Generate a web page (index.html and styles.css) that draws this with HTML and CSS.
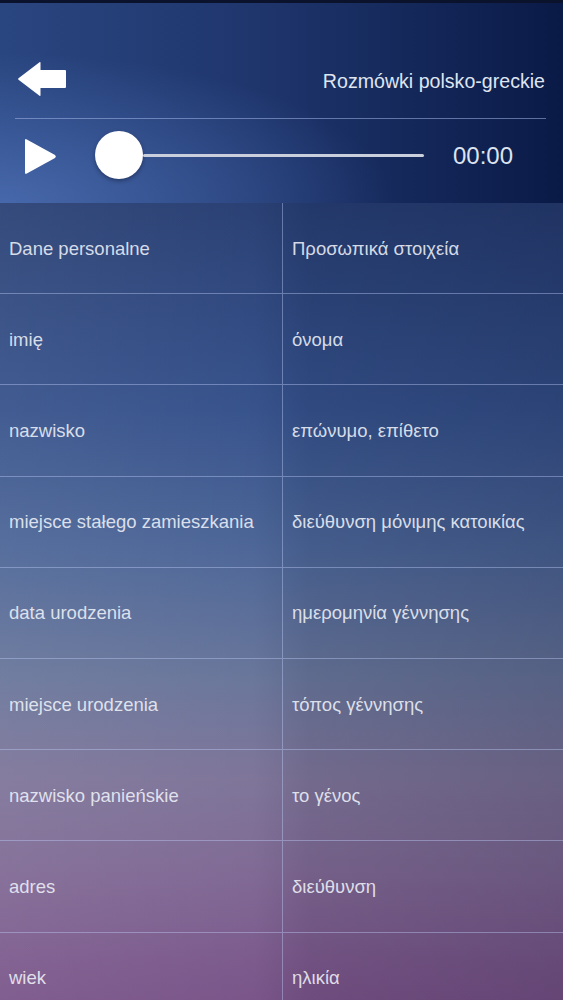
FILE: index.html
```html
<!DOCTYPE html>
<html lang="pl">
<head>
<meta charset="utf-8">
<title>Rozmówki polsko-greckie</title>
<link rel="stylesheet" href="styles.css">
</head>
<body>
<div class="screen">
  <header class="header">
    <div class="topbar">
      <svg class="back" viewBox="0 0 50 36" width="50" height="36" aria-label="Wstecz">
        <path d="M1.5 17.3 L22.5 1.2 Q23.5 0.6 23.5 1.8 L23.5 9 L48 9 Q49 9 49 10 L49 26 Q49 27 48 27 L23.5 27 L23.5 34.2 Q23.5 35.4 22.5 34.8 L1.5 18.7 Q0.6 18 1.5 17.3 Z" fill="#fff"/>
      </svg>
      <div class="title">Rozmówki polsko-greckie</div>
    </div>
    <div class="sep"></div>
    <div class="player">
      <svg class="play" viewBox="0 0 33 37" width="33" height="37" aria-label="Odtwórz">
        <path d="M1 2.5 Q1 0.5 2.8 1.4 L31 17 Q32.8 18.5 31 20 L2.8 35.6 Q1 36.5 1 34.5 Z" fill="#fff"/>
      </svg>
      <div class="slider">
        <div class="knob"></div>
        <div class="track"></div>
      </div>
      <div class="time">00:00</div>
    </div>
  </header>
  <main class="table">
    <div class="row"><div class="cell">Dane personalne</div><div class="cell">Προσωπικά στοιχεία</div></div>
    <div class="row"><div class="cell">imię</div><div class="cell">όνομα</div></div>
    <div class="row"><div class="cell">nazwisko</div><div class="cell">επώνυμο, επίθετο</div></div>
    <div class="row"><div class="cell">miejsce stałego zamieszkania</div><div class="cell">διεύθυνση μόνιμης κατοικίας</div></div>
    <div class="row"><div class="cell">data urodzenia</div><div class="cell">ημερομηνία γέννησης</div></div>
    <div class="row"><div class="cell">miejsce urodzenia</div><div class="cell">τόπος γέννησης</div></div>
    <div class="row"><div class="cell">nazwisko panieńskie</div><div class="cell">το γένος</div></div>
    <div class="row"><div class="cell">adres</div><div class="cell">διεύθυνση</div></div>
    <div class="row"><div class="cell">wiek</div><div class="cell">ηλικία</div></div>
  </main>
</div>
</body>
</html>
```
FILE: styles.css
```css
* { box-sizing: border-box; }
html, body { margin: 0; padding: 0; }
body {
  width: 563px;
  height: 1000px;
  overflow: hidden;
  font-family: "Liberation Sans", Arial, "DejaVu Sans", sans-serif;
  background: #6e4a7e;
}
.screen {
  width: 563px;
  height: 1000px;
  display: flex;
  flex-direction: column;
  overflow: hidden;
}
.header {
  height: 203px;
  flex: none;
  border-top: 3px solid #0b122c;
  padding-top: 58px;
  background:
    radial-gradient(ellipse 70% 75% at 0% 100%, rgba(80,115,185,0.75) 0%, rgba(80,115,185,0) 100%),
    linear-gradient(to right, #2a4680 0%, #1f366d 45%, #0a1a47 100%);
}
.topbar {
  height: 36px;
  display: flex;
  align-items: center;
  justify-content: space-between;
  padding: 0 18px 0 17px;
}
.back { display: block; }
.title {
  color: #dfe5f1;
  font-size: 19.6px;
  padding-top: 4px;
}
.sep {
  height: 1px;
  margin: 21px 17px 0 15px;
  background: rgba(160,180,230,0.55);
}
.player {
  display: flex;
  align-items: center;
  height: 48px;
  margin-top: 12px;
  padding-left: 24px;
}
.play { display: block; margin-top: 2px; }
.slider {
  display: flex;
  align-items: center;
  width: 329px;
  margin-left: 38px;
}
.knob {
  width: 48px;
  height: 48px;
  border-radius: 50%;
  background: #fff;
  flex: none;
  box-shadow: 0 2px 4px rgba(0,0,20,0.35);
}
.track {
  flex: 1;
  height: 3px;
  background: #c9cfdc;
  border-radius: 2px;
}
.time {
  margin-left: 29px;
  color: #dde4f0;
  font-size: 24px;
  padding-top: 2px;
}
.table {
  flex: 1;
  background:
    linear-gradient(to right, rgba(255,255,255,0.07) 0%, rgba(255,255,255,0.02) 45%, rgba(0,0,10,0.08) 55%, rgba(0,0,20,0.16) 100%),
    linear-gradient(to bottom, #263d72 0%, #34508a 25%, #4a6496 42%, #677499 58%, #7c7398 70%, #7e6793 82%, #7a588b 92%, #764f85 100%);
}
.row {
  display: flex;
  height: 91.2px;
  border-bottom: 1px solid rgba(190,205,250,0.42);
}
.cell {
  display: flex;
  align-items: center;
  padding-top: 1px;
  color: rgba(238,241,249,0.88);
  font-size: 18.5px;
}
.cell:first-child {
  width: 283px;
  flex: none;
  padding-left: 9px;
  border-right: 1px solid rgba(190,205,250,0.42);
}
.cell:last-child {
  flex: 1;
  padding-left: 9px;
}
```
